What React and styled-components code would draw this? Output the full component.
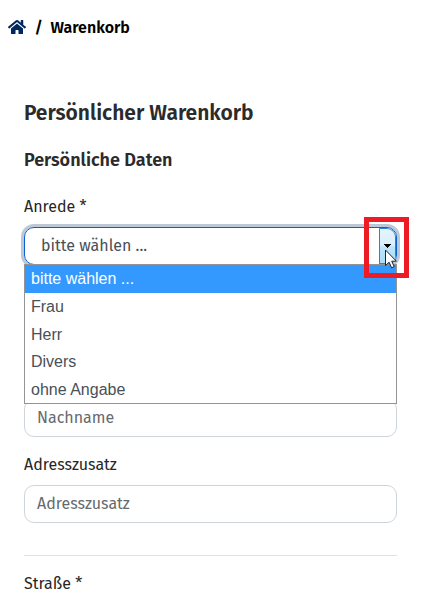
import React, { useState } from "react";
import styled, { createGlobalStyle } from "styled-components";
import { FaHome } from "react-icons/fa";

const GlobalStyle = createGlobalStyle`
    * {
        box-sizing: border-box;
    }

    body {
        margin: 0;
        background: #fff;
        color: #262626;
        font-family: "Fira Sans", "Open Sans", "Noto Sans", sans-serif;
        font-size: 16px;
        line-height: 24px;
        overflow: hidden;
    }
`;

const Page = styled.div`
    height: 595px;
    overflow: hidden;
`;

const Breadcrumb = styled.nav`
    display: flex;
    align-items: center;
    height: 24px;
    margin: 16px 0 0 8px;
    color: #000;
    font-weight: 600;
`;

const HomeLink = styled.a`
    display: flex;
    width: 18px;
    margin-top: -2px;
    color: #00285e;
`;

const Separator = styled.span`
    width: 24.5px;
    padding-left: 8.5px;
`;

const Form = styled.form`
    display: flex;
    flex-direction: column;
    width: 373px;
    margin: 57px 0 0 24px;
`;

const Title = styled.h1`
    margin: 0;
    color: #2b2b2b;
    font-size: 21px;
    font-weight: 600;
    line-height: 32px;
`;

const Subtitle = styled.h2`
    margin: 18px 0 0;
    color: #2b2b2b;
    font-size: 18px;
    font-weight: 600;
    line-height: 26px;
`;

const Label = styled.label`
    margin-top: ${({ $top }) => $top}px;
    line-height: 24px;
`;

const SelectWrapper = styled.div`
    position: relative;
    margin-top: 8px;
`;

const SelectBox = styled.div`
    display: flex;
    justify-content: space-between;
    height: 38px;
    padding-left: 16px;
    border: 1px solid #0a62cf;
    border-radius: 10px;
    box-shadow: 0 0 0 3px #bdc8d6;
    color: #495057;
    line-height: 36px;
    overflow: hidden;
`;

const Arrow = styled.span`
    display: flex;
    align-items: center;
    justify-content: center;
    width: 17px;
    padding-right: 1px;
    border: 1px solid #3c7fb1;
    border-top-color: #2c84dc;
    border-right-color: #2c84dc;
    border-radius: 0 9px 0 0;
    background: linear-gradient(#e5f4fc 0%, #d8effb 50%, #bee6fd 51%, #a9dbf5 100%);
`;

const OptionList = styled.ul`
    position: absolute;
    z-index: 1;
    top: 37px;
    left: 0;
    width: 373px;
    height: 140px;
    margin: 0;
    padding: 0;
    border: 1px solid #949494;
    background: #fff;
    font-family: "Liberation Sans", Arial, sans-serif;
    list-style: none;
`;

const Option = styled.li`
    height: 27.75px;
    padding-left: 6px;
    background: ${({ $active }) => ($active ? "#3399ff" : "transparent")};
    color: ${({ $active }) => ($active ? "#fff" : "#495057")};
    line-height: 28px;
`;

const Marker = styled.div`
    position: absolute;
    z-index: 2;
    top: -10px;
    left: 340px;
    width: 45px;
    height: 61px;
    border: 5px solid #ed1c24;
    pointer-events: none;
`;

const Cursor = styled.svg`
    position: absolute;
    z-index: 3;
    top: 22px;
    left: 361px;
`;

const Field = styled.div`
    height: 38px;
    margin-top: ${({ $top }) => $top}px;
    padding-left: 12px;
    border: 1px solid #ced4da;
    border-radius: 10px;
    color: #656a6e;
    line-height: 36px;
`;

const Divider = styled.hr`
    width: 100%;
    margin: 32px 0 0;
    border: 0;
    border-top: 1px solid #dfe1e3;
`;

const options = ["bitte wählen ...", "Frau", "Herr", "Divers", "ohne Angabe"];

const SalutationSelect = () => {
    const [selected, setSelected] = useState(options[0]);

    return (
        <SelectWrapper>
            <SelectBox>
                {selected}
                <Arrow>
                    <svg width="7" height="4" viewBox="0 0 7 4" shapeRendering="crispEdges">
                        <path d="M0 0h7v1H6v1H5v1H4v1H3V3H2V2H1V1H0z" fill="#000" />
                    </svg>
                </Arrow>
            </SelectBox>
            <OptionList>
                {options.map((option) => (
                    <Option key={option} $active={option === selected} onClick={() => setSelected(option)}>
                        {option}
                    </Option>
                ))}
            </OptionList>
            <Marker />
            <Cursor width="13" height="21" viewBox="0 0 13 21">
                <path d="M.5 1v15.5l3.6-3.3 2.5 5.6 2.6-1.2-2.5-5.4h4.7z" fill="#fff" stroke="#1c2430" />
            </Cursor>
        </SelectWrapper>
    )
}

const App = () => {
    return (
        <Page>
            <GlobalStyle />
            <Breadcrumb>
                <HomeLink><FaHome size={18} /></HomeLink>
                <Separator>/</Separator>
                Warenkorb
            </Breadcrumb>
            <Form>
                <Title>Persönlicher Warenkorb</Title>
                <Subtitle>Persönliche Daten</Subtitle>
                <Label $top={22}>Anrede *</Label>
                <SalutationSelect />
                <Field $top={134}>Nachname</Field>
                <Label $top={16}>Adresszusatz</Label>
                <Field $top={8}>Adresszusatz</Field>
                <Divider />
                <Label $top={16}>Straße *</Label>
            </Form>
        </Page>
    )
}

export default App;
